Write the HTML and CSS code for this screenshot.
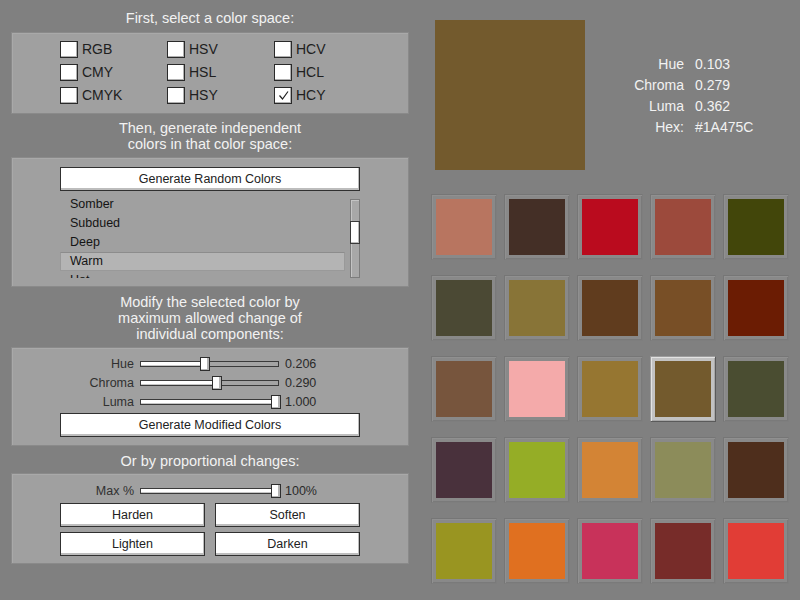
FILE: index.html
```html
<!DOCTYPE html>
<html>
<head>
<meta charset="utf-8">
<link rel="stylesheet" href="styles.css">
</head>
<body>
<div class="app">
  <div class="left">
    <div class="title t1">First, select a color space:</div>
    <div class="panel p1">
      <div class="checks">
        <label class="chk"><span class="box"></span>RGB</label>
        <label class="chk"><span class="box"></span>HSV</label>
        <label class="chk"><span class="box"></span>HCV</label>
        <label class="chk"><span class="box"></span>CMY</label>
        <label class="chk"><span class="box"></span>HSL</label>
        <label class="chk"><span class="box"></span>HCL</label>
        <label class="chk"><span class="box"></span>CMYK</label>
        <label class="chk"><span class="box"></span>HSY</label>
        <label class="chk"><span class="box"><svg width="15" height="15" viewBox="0 0 15 15"><polyline points="3.5,7.5 6.5,11 12,3.5" fill="none" stroke="#222" stroke-width="1.2"/></svg></span>HCY</label>
      </div>
    </div>
    <div class="title t2">Then, generate independent<br>colors in that color space:</div>
    <div class="panel p2">
      <div class="btn wide">Generate Random Colors</div>
      <div class="listwrap">
        <div class="list">
          <div class="item">Somber</div>
          <div class="item">Subdued</div>
          <div class="item">Deep</div>
          <div class="item sel">Warm</div>
          <div class="item">Hot</div>
        </div>
        <div class="scroll"><div class="sthumb"></div></div>
      </div>
    </div>
    <div class="title t3">Modify the selected color by<br>maximum allowed change of<br>individual components:</div>
    <div class="panel p3">
      <div class="srow"><span class="slabel">Hue</span><div class="track"><div class="fill" style="width:62px"></div><div class="thumb" style="left:59px"></div></div><span class="sval">0.206</span></div>
      <div class="srow"><span class="slabel">Chroma</span><div class="track"><div class="fill" style="width:74px"></div><div class="thumb" style="left:71px"></div></div><span class="sval">0.290</span></div>
      <div class="srow"><span class="slabel">Luma</span><div class="track"><div class="fill" style="width:139px"></div><div class="thumb" style="left:130px"></div></div><span class="sval">1.000</span></div>
      <div class="btn wide">Generate Modified Colors</div>
    </div>
    <div class="title t4">Or by proportional changes:</div>
    <div class="panel p4">
      <div class="srow"><span class="slabel">Max %</span><div class="track"><div class="fill" style="width:139px"></div><div class="thumb" style="left:130px"></div></div><span class="sval">100%</span></div>
      <div class="btngrid">
        <div class="btn">Harden</div>
        <div class="btn">Soften</div>
        <div class="btn">Lighten</div>
        <div class="btn">Darken</div>
      </div>
    </div>
  </div>
  <div class="right">
    <div class="top">
      <div class="big" style="background:#735a2d"></div>
      <div class="info">
        <span class="ilabel">Hue</span><span>0.103</span>
        <span class="ilabel">Chroma</span><span>0.279</span>
        <span class="ilabel">Luma</span><span>0.362</span>
        <span class="ilabel">Hex:</span><span>#1A475C</span>
      </div>
    </div>
    <div class="grid">
      <div class="sw"><div class="c" style="background:#b87560"></div></div>
      <div class="sw"><div class="c" style="background:#442f26"></div></div>
      <div class="sw"><div class="c" style="background:#ba0b1e"></div></div>
      <div class="sw"><div class="c" style="background:#9c4a3c"></div></div>
      <div class="sw"><div class="c" style="background:#42460a"></div></div>
      <div class="sw"><div class="c" style="background:#4b4934"></div></div>
      <div class="sw"><div class="c" style="background:#887437"></div></div>
      <div class="sw"><div class="c" style="background:#603c1e"></div></div>
      <div class="sw"><div class="c" style="background:#784f26"></div></div>
      <div class="sw"><div class="c" style="background:#6b1c03"></div></div>
      <div class="sw"><div class="c" style="background:#77553d"></div></div>
      <div class="sw"><div class="c" style="background:#f4aaaa"></div></div>
      <div class="sw"><div class="c" style="background:#967631"></div></div>
      <div class="sw active"><div class="c" style="background:#735a2d"></div></div>
      <div class="sw"><div class="c" style="background:#4a4d31"></div></div>
      <div class="sw"><div class="c" style="background:#49313c"></div></div>
      <div class="sw"><div class="c" style="background:#95ad26"></div></div>
      <div class="sw"><div class="c" style="background:#d38435"></div></div>
      <div class="sw"><div class="c" style="background:#8c8c5a"></div></div>
      <div class="sw"><div class="c" style="background:#4e2e1c"></div></div>
      <div class="sw"><div class="c" style="background:#999521"></div></div>
      <div class="sw"><div class="c" style="background:#e07020"></div></div>
      <div class="sw"><div class="c" style="background:#c8325a"></div></div>
      <div class="sw"><div class="c" style="background:#772c29"></div></div>
      <div class="sw"><div class="c" style="background:#e13d36"></div></div>
    </div>
  </div>
</div>
</body>
</html>
```

FILE: styles.css
```css
* { box-sizing: border-box; }
html, body { margin: 0; padding: 0; }
body {
  background: #808080;
  font-family: "Liberation Sans", Arial, sans-serif;
  width: 800px;
  height: 600px;
  overflow: hidden;
}
.app { display: flex; }
.left { width: 420px; padding: 0 11px; }
.title {
  color: #f2f2f2;
  font-size: 14.5px;
  line-height: 16px;
  text-align: center;
  margin: 7px 0 5px;
}
.t1 { margin-top: 10px; margin-bottom: 6px; }
.t2 { margin-top: 6px; }
.t4 { margin-bottom: 4px; }
.panel {
  background: #a0a0a0;
  border: 1px solid #8a8a8a;
  box-shadow: inset 1px 1px 0 #a9a9a9;
  color: #202020;
}
.p1 { height: 82px; padding: 8px 0 0 48px; }
.checks {
  display: grid;
  grid-template-columns: 107px 107px 107px;
  grid-auto-rows: 17px;
  row-gap: 6px;
}
.chk {
  display: flex;
  align-items: center;
  font-size: 14px;
  gap: 4px;
  line-height: 17px;
}
.box {
  width: 18px;
  height: 17px;
  background: #fff;
  border: 1px solid #2a2a2a;
  box-shadow: inset -1px -1px 0 #b0b0b0;
  display: flex;
  align-items: center;
  justify-content: center;
}
.box svg { display: block; }
.btn {
  height: 24px;
  background: #fff;
  border: 1px solid #303030;
  box-shadow: inset -1px -2px 0 #bdbdbd;
  font-size: 12.5px;
  color: #222;
  display: flex;
  align-items: center;
  justify-content: center;
  padding-bottom: 1px;
}
.wide { width: 300px; margin-left: 48px; }
.p2 { height: 130px; padding-top: 9px; }
.listwrap {
  display: flex;
  margin: 4px 0 0 48px;
  width: 300px;
  height: 83px;
}
.list {
  width: 285px;
  overflow: hidden;
  height: 83px;
}
.item {
  height: 19px;
  line-height: 18px;
  font-size: 12.5px;
  color: #141414;
  padding-left: 10px;
}
.item.sel {
  background: #b4b4b4;
  border: 1px solid #999;
  border-top-color: #8c8c8c;
  padding-left: 9px;
  line-height: 17px;
}
.scroll {
  margin-left: 5px;
  margin-top: 4px;
  width: 10px;
  height: 79px;
  background: #a8a8a8;
  border: 1px solid #7c7c7c;
  box-shadow: inset 1px 1px 0 #c4c4c4;
  display: flex;
  flex-direction: column;
}
.sthumb {
  margin-top: 21px;
  height: 23px;
  margin-left: -1px;
  margin-right: -1px;
  background: #fff;
  border: 1px solid #3a3a3a;
  box-shadow: inset -1px -1px 0 #bbb;
}
.p3 { height: 99px; padding-top: 6px; }
.p4 { height: 91px; padding-top: 7px; }
.srow {
  display: grid;
  grid-template-columns: 122px 139px auto;
  column-gap: 6px;
  align-items: center;
  height: 19px;
  font-size: 12.5px;
  color: #303030;
}
.slabel { text-align: right; }
.sval { color: #2a2a2a; }
.track {
  position: relative;
  height: 6px;
  background: #a4a4a4;
  border: 1px solid #3a3a3a;
}
.fill {
  position: absolute;
  left: -1px;
  top: -1px;
  height: 6px;
  background: #fff;
  border: 1px solid #3a3a3a;
  box-shadow: inset 0 -1px 0 #c6c6c6;
}
.thumb {
  position: absolute;
  top: -5px;
  width: 10px;
  height: 14px;
  background: #fff;
  border: 1px solid #2e2e2e;
  box-shadow: inset -2px -1px 0 #b4b4b4;
}
.p3 .wide { margin-top: 2px; }
.btngrid {
  display: grid;
  grid-template-columns: 145px 145px;
  column-gap: 10px;
  row-gap: 5px;
  width: 300px;
  margin: 3px 0 0 48px;
}
.right { width: 380px; padding: 20px 0 0 11px; }
.top { display: flex; align-items: center; }
.big { width: 150px; height: 150px; margin-left: 4px; }
.info {
  margin-left: 19px;
  display: grid;
  grid-template-columns: 80px auto;
  column-gap: 11px;
  grid-auto-rows: 21px;
  align-items: center;
  color: #f2f2f2;
  font-size: 14px;
}
.ilabel { text-align: right; }
.grid {
  margin-top: 24px;
  display: grid;
  grid-template-columns: repeat(5, 66px);
  grid-auto-rows: 66px;
  column-gap: 7px;
  row-gap: 15px;
}
.sw {
  background: #898989;
  border: 1px solid #767676;
  border-right-color: #7e7e7e;
  border-bottom-color: #7e7e7e;
  box-shadow: inset 1px 1px 0 #909090, inset -1px -1px 0 #7a7a7a;
  padding: 4px;
}
.sw .c { width: 100%; height: 100%; }
.active {
  background: #c2c2c2;
  border-color: #9c9c9c #5a5a5a #5a5a5a #9c9c9c;
  box-shadow: inset 1px 1px 0 #e2e2e2, inset -1px -1px 0 #a8a8a8;
}
```
